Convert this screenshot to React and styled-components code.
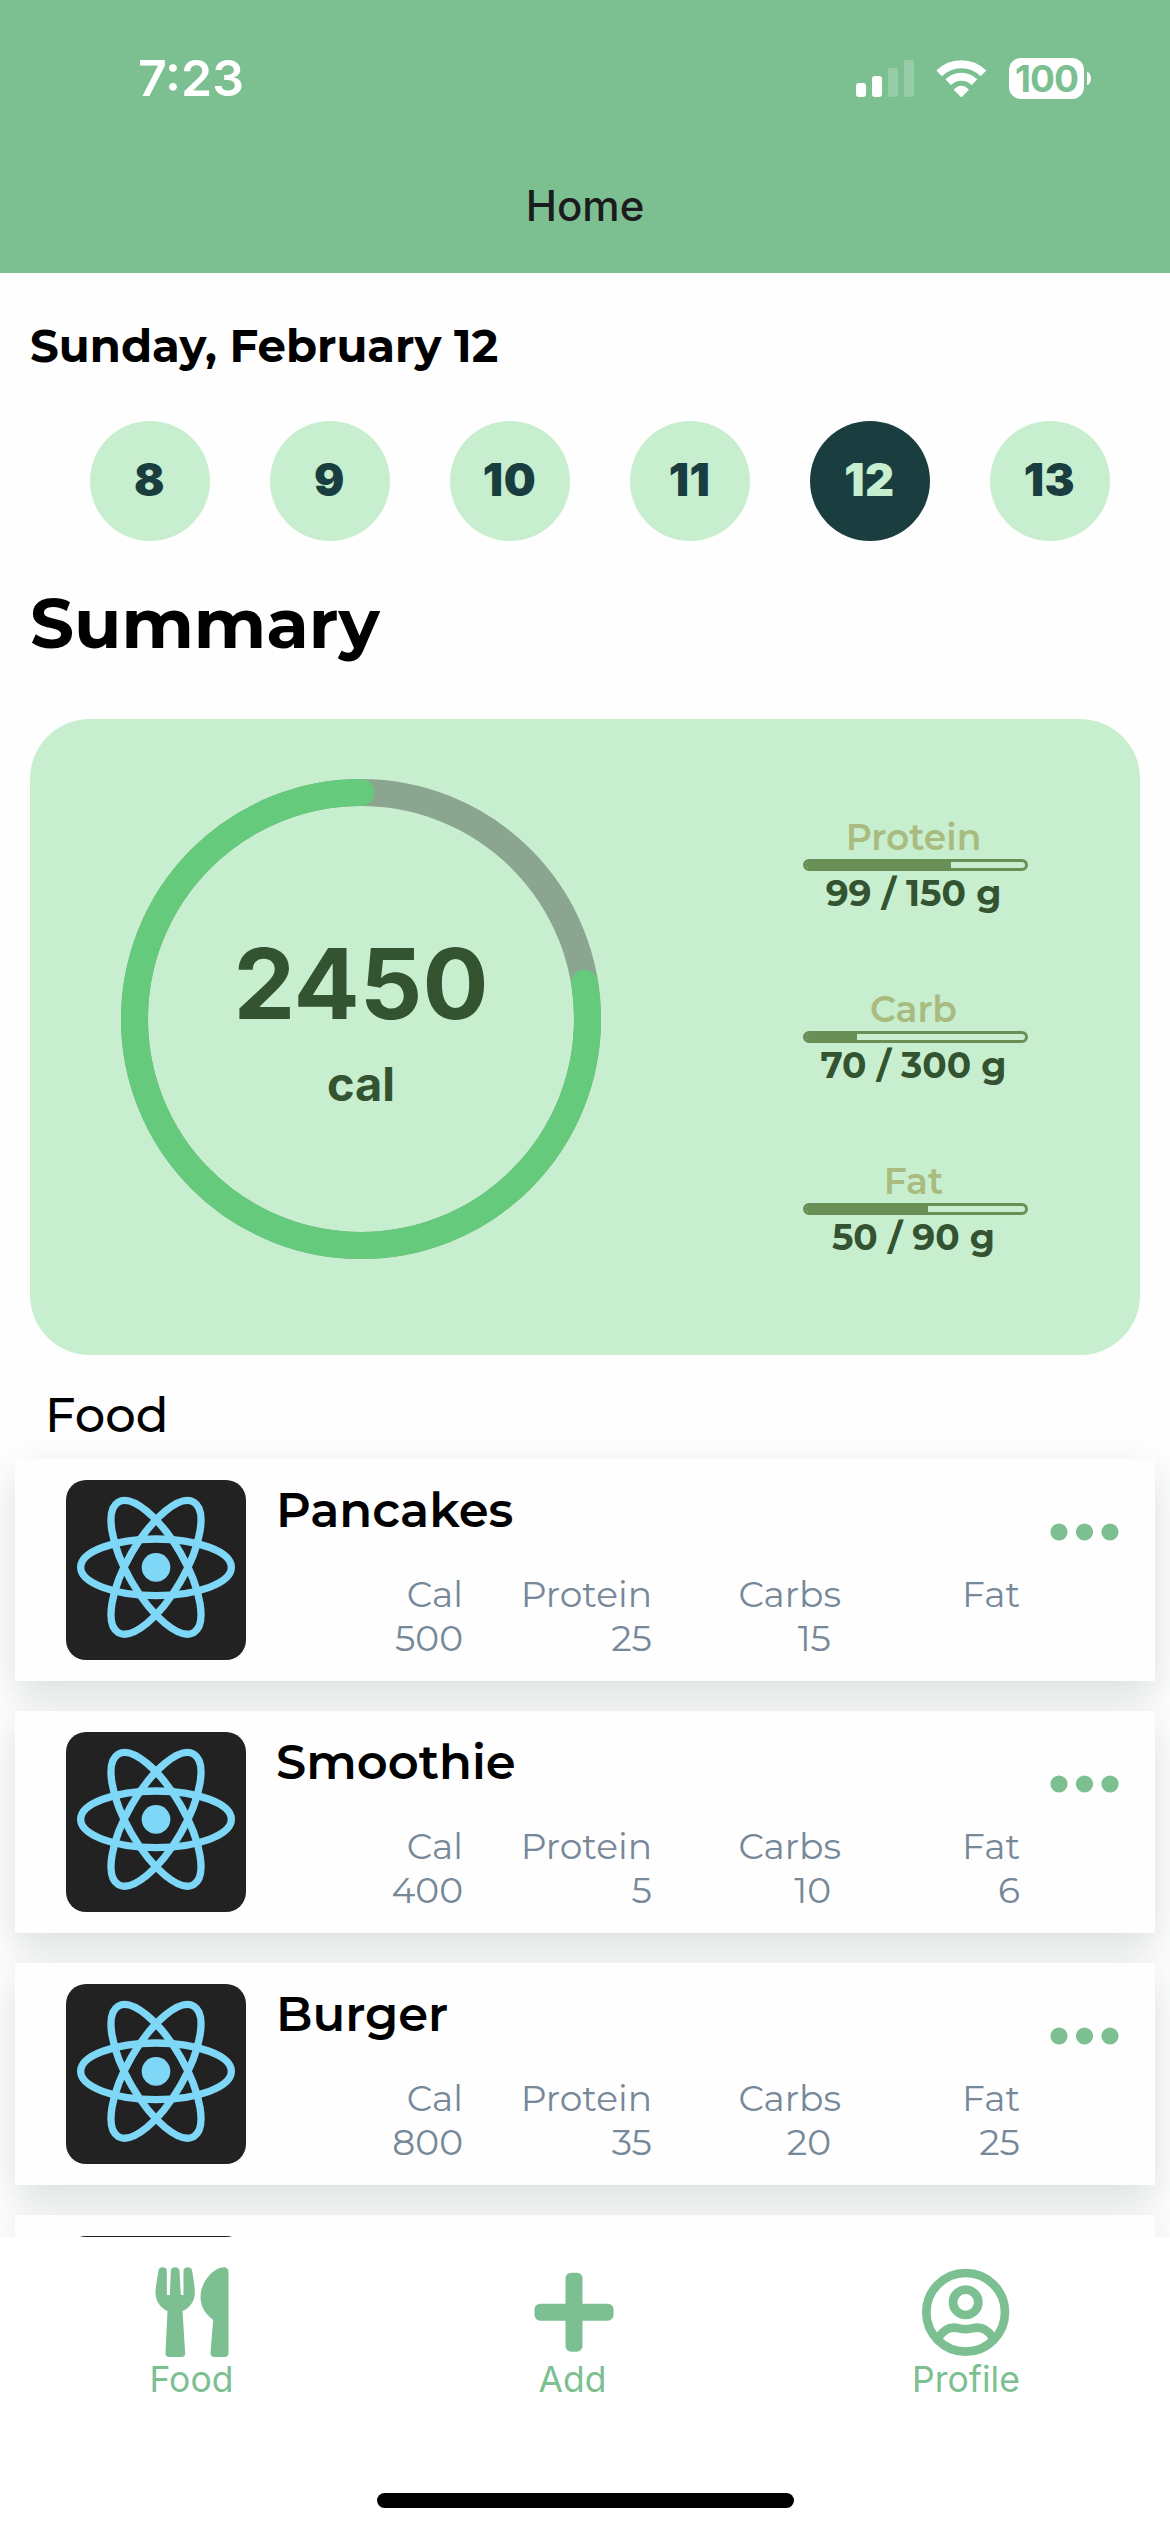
import React from "react";
import styled, { createGlobalStyle } from "styled-components";

const GlobalStyle = createGlobalStyle`
  html, body { margin: 0; padding: 0; background: #fff; }
  * { box-sizing: border-box; }
`;

const system = `Inter, "Liberation Sans", sans-serif`;
const brand = `Montserrat, Inter, "Liberation Sans", sans-serif`;
const green = "#7cc092";
const mint = "#c7efcf";
const forest = "#345331";

const Screen = styled.div`
  width: 1170px;
  height: 2532px;
  overflow: hidden;
  display: flex;
  flex-direction: column;
  background: #fefefe;
  font-family: ${brand};
  color: #000;
  white-space: nowrap;
`;

/* ---------- header ---------- */

const Header = styled.header`
  height: 273px;
  flex: none;
  background: ${green};
  font-family: ${system};
`;

const StatusBar = styled.div`
  height: 156px;
  padding: 0 79px 0 138px;
  display: flex;
  align-items: center;
  justify-content: space-between;
`;

const Clock = styled.span`
  font-size: 50px;
  font-weight: 600;
  line-height: 60px;
  color: #fff;
`;

const StatusIcons = styled.div`
  display: flex;
  align-items: center;
`;

const SignalIcon = styled.svg`
  width: 58px;
  height: 37px;
  margin-right: 22px;
`;

const WifiIcon = styled.svg`
  width: 51px;
  height: 37px;
  margin-right: 22px;
`;

const Battery = styled.div`
  width: 75px;
  height: 41px;
  border-radius: 12px;
  background: #fff;
  color: ${green};
  font-size: 37px;
  font-weight: 700;
  letter-spacing: -1px;
  line-height: 41px;
  text-align: center;
`;

const BatteryTip = styled.span`
  width: 4px;
  height: 13px;
  margin-left: 3px;
  border-radius: 0 4px 4px 0 / 0 6.5px 6.5px 0;
  background: #fff;
`;

const ScreenTitle = styled.h1`
  margin: 0;
  height: 100px;
  line-height: 100px;
  font-size: 42px;
  font-weight: 500;
  text-align: center;
  color: #1c1c1e;
`;

/* ---------- content ---------- */

const Content = styled.main`
  height: 1964px;
  flex: none;
  overflow: hidden;
  display: flex;
  flex-direction: column;
`;

const DateLabel = styled.div`
  margin: 46px 0 0 30px;
  font-size: 45px;
  font-weight: 700;
  line-height: 54px;
`;

const Days = styled.div`
  display: flex;
  gap: 60px;
  margin: 48px 0 0 90px;
`;

const Day = styled.div`
  width: 120px;
  height: 120px;
  border-radius: 50%;
  padding-right: 1px;
  text-align: center;
  line-height: 118px;
  font-family: ${system};
  font-size: 45px;
  font-weight: 900;
  letter-spacing: 0.5px;
  background: ${(p) => (p.$active ? "#1a3e40" : mint)};
  color: ${(p) => (p.$active ? mint : "#1a3e40")};
`;

const SectionTitle = styled.h2`
  margin: 42px 0 0 30px;
  font-size: 69px;
  font-weight: 700;
  line-height: 80px;
`;

const SummaryCard = styled.section`
  height: 636px;
  flex: none;
  margin: 56px 30px 0;
  padding-left: 91px;
  border-radius: 60px;
  background: ${mint};
  display: flex;
  align-items: flex-start;
`;

const Ring = styled.div`
  width: 480px;
  height: 480px;
  margin-top: 60px;
  display: grid;
  place-items: center;

  & > * { grid-area: 1 / 1; }
`;

const Calories = styled.div`
  padding-top: 30px;
  text-align: center;
  font-family: ${system};
  color: ${forest};
`;

const CalorieCount = styled.div`
  font-size: 98px;
  font-weight: 700;
  line-height: 100px;
`;

const CalorieUnit = styled.div`
  font-size: 47px;
  font-weight: 650;
  line-height: 100px;
`;

const Macros = styled.div`
  width: 225px;
  margin: 96px 0 0 202px;
  display: flex;
  flex-direction: column;
  gap: 72px;
`;

const Macro = styled.div`
  display: flex;
  flex-direction: column;
  text-align: center;
  font-size: 36px;
  line-height: 44px;
`;

const MacroName = styled.span`
  padding-right: 4px;
  font-weight: 600;
  color: #a9bb7f;
`;

const MacroValue = styled.span`
  padding-right: 4px;
  font-weight: 700;
  color: ${forest};
`;

const Track = styled.div`
  height: 12px;
  border: 3px solid #698f57;
  border-radius: 6px;
  overflow: hidden;
`;

const Fill = styled.div`
  height: 100%;
  background: #698f57;
`;

/* ---------- food list ---------- */

const ListTitle = styled.h3`
  margin: 31px 0 15px 45px;
  font-size: 48px;
  font-weight: 500;
  line-height: 58px;
`;

const FoodList = styled.div`
  display: flex;
  flex-direction: column;
  gap: 30px;
  padding: 0 15px;
`;

const FoodCard = styled.article`
  position: relative;
  height: 222px;
  flex: none;
  padding: 21px 36px 0 51px;
  display: flex;
  background: #fefefe;
  box-shadow: 0 15px 36px rgba(30, 66, 42, 0.16);
`;

const Thumb = styled.svg`
  width: 180px;
  height: 180px;
  flex: none;
  border-radius: 20px;
  background: #222;
`;

const FoodBody = styled.div`
  width: 744px;
  margin-left: 30px;
`;

const FoodName = styled.div`
  font-size: 48px;
  font-weight: 600;
  line-height: 60px;
`;

const Stats = styled.div`
  display: grid;
  grid-template-columns: 187px 189px 189px 179px;
  margin-top: 32px;
  text-align: right;
  font-size: 36px;
  line-height: 44px;
  color: #778899;
`;

const Stat = styled.div`
  display: flex;
  flex-direction: column;
`;

const StatValue = styled.span`
  padding-right: ${(p) => p.$inset || 0}px;
`;

const MoreIcon = styled.svg`
  width: 69px;
  height: 18px;
  margin: 43px 0 0 auto;
`;

/* ---------- tab bar ---------- */

const TabBar = styled.nav`
  height: 295px;
  flex: none;
  display: flex;
  flex-direction: column;
  align-items: center;
  justify-content: space-between;
  padding: 30px 0 24px;
  background: #fff;
  font-family: ${system};
  color: ${green};
`;

const Tabs = styled.div`
  width: 100%;
  display: flex;
  justify-content: space-around;
`;

const Tab = styled.div`
  width: ${(p) => p.$width}px;
  display: flex;
  flex-direction: column;
  align-items: center;
  font-size: 35.5px;
  line-height: 45px;
`;

const TabIcon = styled.svg`
  width: 90px;
  height: 90px;
  flex: none;
  overflow: visible;
`;

const HomeIndicator = styled.div`
  width: 417px;
  height: 15px;
  border-radius: 8px;
  background: #000;
`;

const days = [8, 9, 10, 11, 12, 13];

const macros = [
  { name: "Protein", value: 99, goal: 150 },
  { name: "Carb", value: 70, goal: 300 },
  { name: "Fat", value: 50, goal: 90 },
];

const foods = [
  { name: "Pancakes", cal: 500, protein: 25, carbs: 15, fat: "" },
  { name: "Smoothie", cal: 400, protein: 5, carbs: 10, fat: 6 },
  { name: "Burger", cal: 800, protein: 35, carbs: 20, fat: 25 },
  { name: "", hidden: true },
];

function CalorieRing({ progress }) {
  const r = 226.5;
  const length = 2 * Math.PI * r;
  return (
    <svg width="480" height="480" viewBox="0 0 480 480" fill="none" strokeWidth="27">
      <circle cx="240" cy="240" r={r} stroke="#8ba591" />
      <circle
        cx="240"
        cy="240"
        r={r}
        stroke="#65ca7b"
        strokeLinecap="round"
        strokeDasharray={`${length * progress} ${length}`}
        transform="translate(480 0) scale(-1 1) rotate(-90 240 240)"
      />
    </svg>
  );
}

function ReactThumb() {
  return (
    <Thumb viewBox="0 0 540 540" fill="none" stroke="#7fd7f7" strokeWidth="22">
      <ellipse cx="270" cy="262" rx="226" ry="85" />
      <ellipse cx="270" cy="262" rx="226" ry="85" transform="rotate(60 270 262)" />
      <ellipse cx="270" cy="262" rx="226" ry="85" transform="rotate(120 270 262)" />
      <circle cx="270" cy="262" r="43" fill="#7fd7f7" stroke="none" />
    </Thumb>
  );
}

function FoodRow({ food }) {
  return (
    <FoodCard>
      <ReactThumb />
      {!food.hidden && (
        <>
          <FoodBody>
            <FoodName>{food.name}</FoodName>
            <Stats>
              <Stat><span>Cal</span><StatValue>{food.cal}</StatValue></Stat>
              <Stat><span>Protein</span><StatValue>{food.protein}</StatValue></Stat>
              <Stat><span>Carbs</span><StatValue $inset={10}>{food.carbs}</StatValue></Stat>
              <Stat><span>Fat</span><StatValue>{food.fat}</StatValue></Stat>
            </Stats>
          </FoodBody>
          <MoreIcon viewBox="0 0 69 18" fill={green}>
            <circle cx="9" cy="9" r="8.6" />
            <circle cx="34.5" cy="9" r="8.6" />
            <circle cx="60" cy="9" r="8.6" />
          </MoreIcon>
        </>
      )}
    </FoodCard>
  );
}

export default function App() {
  return (
    <Screen>
      <GlobalStyle />
      <Header>
        <StatusBar>
          <Clock>7:23</Clock>
          <StatusIcons>
            <SignalIcon viewBox="0 0 58 37" fill="#fff">
              <rect x="0" y="23" width="10" height="14" rx="3" />
              <rect x="16" y="16" width="10" height="21" rx="3" />
              <rect x="32" y="8" width="10" height="29" rx="3" opacity="0.2" />
              <rect x="48" y="0" width="10" height="37" rx="3" opacity="0.2" />
            </SignalIcon>
            <WifiIcon viewBox="288 57 153 111" fill="none" stroke="#fff" strokeWidth="24">
              <path d="M297.5 97 A94 94 0 0 1 430.5 97" />
              <path d="M324.4 123.4 A56 56 0 0 1 403.6 123.4" />
              <path d="M341 146 Q364 123 387 146 L366 167 Q364 169 362 167 Z" fill="#fff" stroke="none" />
            </WifiIcon>
            <Battery>100</Battery>
            <BatteryTip />
          </StatusIcons>
        </StatusBar>
        <ScreenTitle>Home</ScreenTitle>
      </Header>

      <Content>
        <DateLabel>Sunday, February 12</DateLabel>
        <Days>
          {days.map((d) => (
            <Day key={d} $active={d === 12}>{d}</Day>
          ))}
        </Days>
        <SectionTitle>Summary</SectionTitle>

        <SummaryCard>
          <Ring>
            <CalorieRing progress={0.775} />
            <Calories>
              <CalorieCount>2450</CalorieCount>
              <CalorieUnit>cal</CalorieUnit>
            </Calories>
          </Ring>
          <Macros>
            {macros.map((m) => (
              <Macro key={m.name}>
                <MacroName>{m.name}</MacroName>
                <Track>
                  <Fill style={{ width: `${(m.value / m.goal) * 100}%` }} />
                </Track>
                <MacroValue>{`${m.value} / ${m.goal} g`}</MacroValue>
              </Macro>
            ))}
          </Macros>
        </SummaryCard>

        <ListTitle>Food</ListTitle>
        <FoodList>
          {foods.map((f, i) => (
            <FoodRow key={i} food={f} />
          ))}
        </FoodList>
      </Content>

      <TabBar>
        <Tabs>
          <Tab $width={90}>
            <TabIcon viewBox="49.5 81 270 270" fill={green}>
              <path d="M84 93 Q85 82 96 82 Q109 82 109 93 V165 H118 L121 93 Q121 82 133.500 82 Q146 82 147 93 L151 165 H159 V93 Q160 82 172 82 Q183 82 185 93 C189 118 193 140 193 158 C193 185 176 205 156 213 L164 339 Q164 351 153 351 H116 Q105 351 105 339 L111 213 C92 205 75 185 75 158 C75 140 80 118 84 93 Z" />
              <path d="M294 96 Q294 82 279 82 C245 84 210 130 210 170 C210 200 225 222 248 240 L240 339 Q240 351 252 351 H282 Q294 351 294 339 Z" />
            </TabIcon>
            Food
          </Tab>
          <Tab $width={86}>
            <TabIcon viewBox="1192.5 81 270 270" fill={green}>
              <rect x="1305" y="98" width="51" height="237" rx="17" />
              <rect x="1212" y="191" width="237" height="51" rx="17" />
            </TabIcon>
            Add
          </Tab>
          <Tab $width={115}>
            <TabIcon viewBox="93 51 270 270" fill="none" stroke={green} strokeWidth="26">
              <circle cx="227" cy="187" r="118" />
              <circle cx="227" cy="157" r="38" />
              <path d="M145 264 C158 243 174 233 192 233 C206 233 210 237.500 227 237.500 C244 237.500 248 233 262 233 C280 233 296 243 309 264" />
            </TabIcon>
            Profile
          </Tab>
        </Tabs>
        <HomeIndicator />
      </TabBar>
    </Screen>
  );
}
